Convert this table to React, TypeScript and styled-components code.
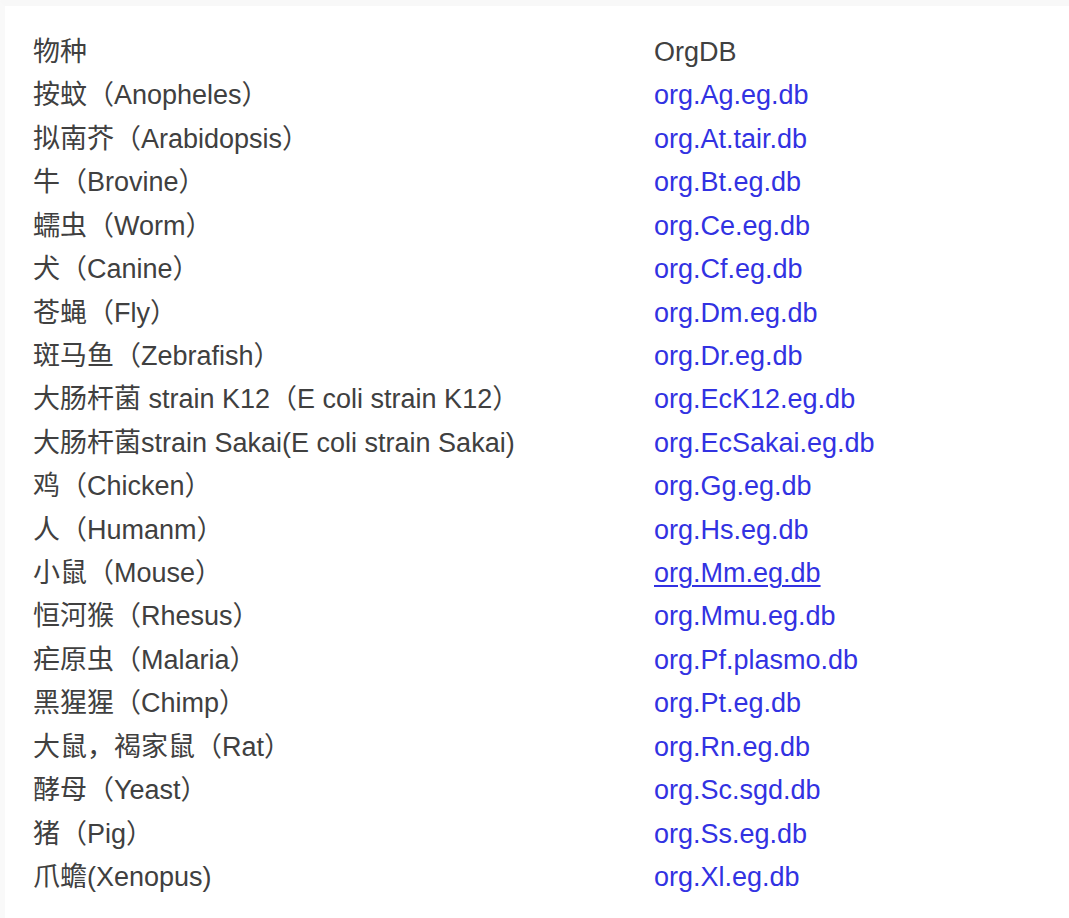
import React from "react";
import styled, { createGlobalStyle } from "styled-components";

const Global = createGlobalStyle`
  html, body { margin: 0; padding: 0; background: #ffffff; }
  body { font-family: "Liberation Sans", Arial, "Noto Sans CJK SC", sans-serif; }
`;

const Page = styled.div`
  min-height: 918px;
  box-sizing: border-box;
  border-top: 6px solid #f8f8f8;
  border-left: 5px solid #f9f9f9;
  padding: 25px 0 0 28px;
`;

const Table = styled.div`
  display: grid;
  grid-template-columns: 621px auto;
  font-size: 27px;
  line-height: 43.42px;
  font-family: "Liberation Sans", Arial, "Noto Sans CJK SC", sans-serif;
`;

const Cell = styled.div`
  color: #404040;
  white-space: nowrap;
`;

const Link = styled.a<{ $underline?: boolean }>`
  color: #3232e2;
  text-decoration: ${(p) => (p.$underline ? "underline" : "none")};
  text-underline-offset: 3px;
  text-decoration-thickness: 2px;
`;

const rows: [string, string][] = [
  ["按蚊（Anopheles）", "org.Ag.eg.db"],
  ["拟南芥（Arabidopsis）", "org.At.tair.db"],
  ["牛（Brovine）", "org.Bt.eg.db"],
  ["蠕虫（Worm）", "org.Ce.eg.db"],
  ["犬（Canine）", "org.Cf.eg.db"],
  ["苍蝇（Fly）", "org.Dm.eg.db"],
  ["斑马鱼（Zebrafish）", "org.Dr.eg.db"],
  ["大肠杆菌 strain K12（E coli strain K12）", "org.EcK12.eg.db"],
  ["大肠杆菌strain Sakai(E coli strain Sakai)", "org.EcSakai.eg.db"],
  ["鸡（Chicken）", "org.Gg.eg.db"],
  ["人（Humanm）", "org.Hs.eg.db"],
  ["小鼠（Mouse）", "org.Mm.eg.db"],
  ["恒河猴（Rhesus）", "org.Mmu.eg.db"],
  ["疟原虫（Malaria）", "org.Pf.plasmo.db"],
  ["黑猩猩（Chimp）", "org.Pt.eg.db"],
  ["大鼠，褐家鼠（Rat）", "org.Rn.eg.db"],
  ["酵母（Yeast）", "org.Sc.sgd.db"],
  ["猪（Pig）", "org.Ss.eg.db"],
  ["爪蟾(Xenopus)", "org.Xl.eg.db"],
];

export default function App() {
  return (
    <>
      <Global />
      <Page>
        <Table>
          <Cell>物种</Cell>
          <Cell>OrgDB</Cell>
          {rows.map(([name, db]) => (
            <React.Fragment key={db}>
              <Cell>{name}</Cell>
              <Cell>
                <Link href="#" $underline={db === "org.Mm.eg.db"}>
                  {db}
                </Link>
              </Cell>
            </React.Fragment>
          ))}
        </Table>
      </Page>
    </>
  );
}
